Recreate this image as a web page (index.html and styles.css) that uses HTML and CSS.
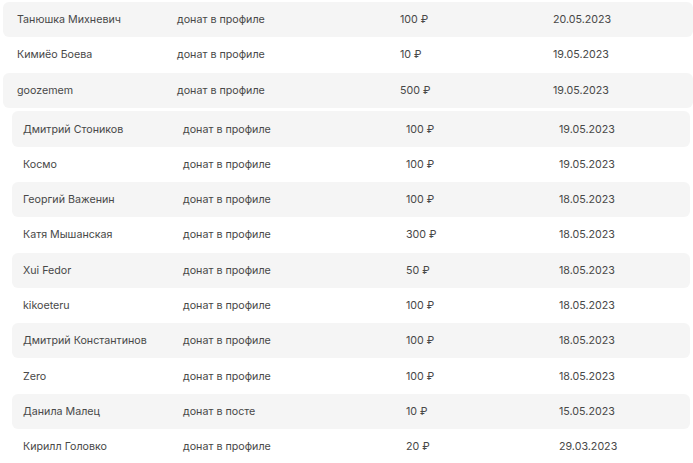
FILE: index.html
```html
<!DOCTYPE html>
<html lang="ru">
<head>
<meta charset="utf-8">
<link rel="stylesheet" href="styles.css">
</head>
<body>
<div class="table table-top">
  <div class="row alt"><span>Танюшка Михневич</span><span>донат в профиле</span><span>100 ₽</span><span>20.05.2023</span></div>
  <div class="row"><span>Кимиёо Боева</span><span>донат в профиле</span><span>10 ₽</span><span>19.05.2023</span></div>
  <div class="row alt"><span>goozemem</span><span>донат в профиле</span><span>500 ₽</span><span>19.05.2023</span></div>
</div>
<div class="table table-bottom">
  <div class="row alt"><span>Дмитрий Стоников</span><span>донат в профиле</span><span>100 ₽</span><span>19.05.2023</span></div>
  <div class="row"><span>Космо</span><span>донат в профиле</span><span>100 ₽</span><span>19.05.2023</span></div>
  <div class="row alt"><span>Георгий Важенин</span><span>донат в профиле</span><span>100 ₽</span><span>18.05.2023</span></div>
  <div class="row"><span>Катя Мышанская</span><span>донат в профиле</span><span>300 ₽</span><span>18.05.2023</span></div>
  <div class="row alt"><span>Xui Fedor</span><span>донат в профиле</span><span>50 ₽</span><span>18.05.2023</span></div>
  <div class="row"><span>kikoeteru</span><span>донат в профиле</span><span>100 ₽</span><span>18.05.2023</span></div>
  <div class="row alt"><span>Дмитрий Константинов</span><span>донат в профиле</span><span>100 ₽</span><span>18.05.2023</span></div>
  <div class="row"><span>Zero</span><span>донат в профиле</span><span>100 ₽</span><span>18.05.2023</span></div>
  <div class="row alt"><span>Данила Малец</span><span>донат в посте</span><span>10 ₽</span><span>15.05.2023</span></div>
  <div class="row"><span>Кирилл Головко</span><span>донат в профиле</span><span>20 ₽</span><span>29.03.2023</span></div>
</div>
</body>
</html>
```
FILE: styles.css
```css
html, body {
  margin: 0;
  padding: 0;
  background: #ffffff;
  overflow: hidden;
}
body {
  font-family: Inter, "Noto Sans", sans-serif;
  font-size: 10.7px;
  color: #484848;
  width: 693px;
  height: 463px;
}
.table {
  display: flex;
  flex-direction: column;
}
.table-top {
  padding: 2px 3px 0 3px;
}
.table-bottom {
  margin-top: 3.5px;
  padding-left: 12px;
}
.row {
  display: grid;
  grid-template-columns: 160px 223px 153px 1fr;
  align-items: center;
  height: 35.3px;
  border-radius: 6px;
  white-space: nowrap;
}
.table-top .row {
  padding-left: 14px;
  width: 690px;
  box-sizing: border-box;
}
.table-bottom .row {
  padding-left: 11px;
  width: 678px;
  box-sizing: border-box;
}
.row.alt {
  background: #f5f5f5;
}
```
